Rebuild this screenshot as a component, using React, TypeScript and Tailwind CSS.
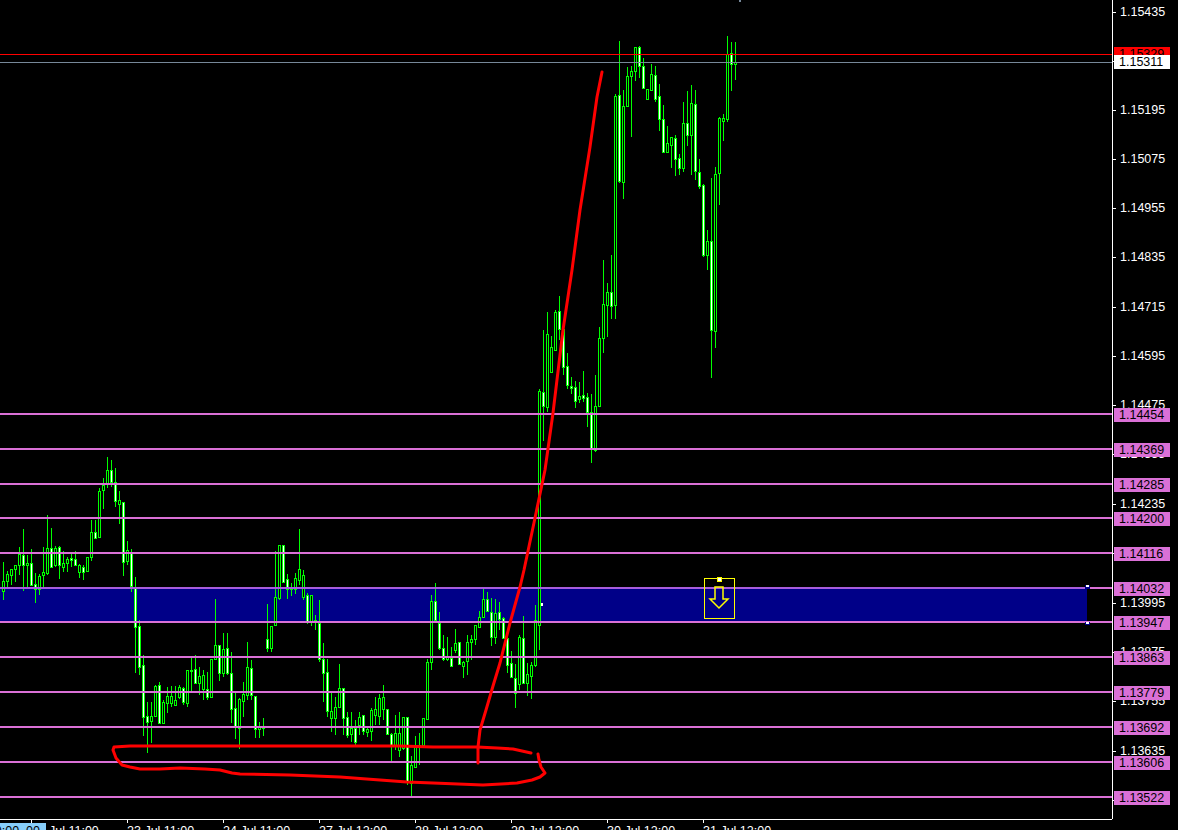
const GREEN = "#00ff00";

// [wick top, body top, body bottom, wick bottom, filled] - one candle every 4px from x=3
const candles: number[][] = [
  [562,581,591,600,0],[571,574,581,587,0],[569,569,575,585,0],[565,565,569,582,0],[547,554,565,575,0],[529,555,565,591,1],
  [555,563,565,587,0],[549,563,585,585,1],[573,584,589,603,1],[574,576,589,595,0],[547,572,575,587,0],[515,548,573,575,0],
  [528,548,567,567,1],[546,548,565,567,0],[546,547,565,579,1],[551,563,567,572,0],[557,559,563,572,0],[554,558,560,567,1],
  [551,559,565,565,1],[564,565,572,578,0],[565,567,572,580,1],[557,557,571,571,0],[520,532,557,561,0],[520,532,538,539,1],
  [488,491,537,538,0],[478,485,490,509,0],[457,470,483,488,0],[460,470,482,487,1],[468,482,501,507,1],[491,500,504,524,0],
  [502,502,562,576,1],[541,550,561,565,0],[549,552,586,592,1],[577,587,627,673,1],[620,626,667,675,1],[655,665,717,736,1],
  [702,716,722,753,1],[702,716,721,743,0],[685,686,716,717,0],[682,685,723,723,1],[700,702,723,723,0],[687,696,703,713,0],
  [686,696,703,707,0],[686,700,705,706,0],[685,687,697,699,0],[687,688,702,705,1],[670,670,703,707,0],[658,670,671,692,0],
  [655,669,683,683,1],[667,676,683,695,0],[670,675,689,700,0],[672,689,697,700,1],[659,659,697,698,0],[599,645,659,660,0],
  [645,645,673,681,1],[633,649,673,677,0],[633,648,673,675,1],[652,673,709,723,1],[693,708,727,739,1],[698,699,728,749,0],
  [682,694,701,717,0],[642,667,695,700,0],[660,668,695,700,1],[696,696,729,738,1],[722,727,729,738,0],[718,726,728,736,0],
  [604,639,648,652,1],[626,626,648,652,0],[551,597,625,626,0],[545,545,598,600,0],[545,545,582,582,1],[574,579,589,599,1],
  [583,588,589,596,0],[573,578,589,594,0],[529,569,580,585,0],[570,575,597,600,0],[593,595,622,624,1],[595,595,622,626,0],
  [615,620,622,630,0],[600,623,659,662,1],[643,659,673,702,1],[659,672,711,717,1],[693,711,718,732,0],[697,707,718,735,0],
  [664,688,707,708,0],[688,688,718,735,1],[712,717,735,738,1],[712,728,734,742,0],[720,728,742,745,1],[712,717,725,735,0],
  [715,715,731,735,1],[727,729,732,737,0],[708,710,731,741,0],[697,709,715,725,0],[694,698,716,725,0],[685,697,709,720,0],
  [709,709,734,735,1],[733,734,745,761,1],[715,733,745,750,0],[712,733,750,757,0],[717,717,748,750,0],[717,717,782,785,1],
  [756,765,783,796,0],[736,745,767,767,0],[733,745,747,765,0],[718,718,745,745,0],[659,662,719,720,0],[595,601,662,670,0],
  [583,601,620,620,1],[612,623,648,650,1],[635,648,659,661,1],[637,657,659,661,0],[647,658,666,667,1],[629,643,650,653,0],
  [642,642,664,665,1],[661,662,666,678,0],[635,642,661,675,0],[635,639,642,660,0],[625,625,639,645,0],[611,617,627,627,0],
  [589,599,617,617,0],[592,599,611,612,1],[598,612,637,646,1],[599,613,637,644,0],[602,612,619,630,1],[617,618,638,638,1],
  [637,638,665,673,1],[651,663,677,677,1],[664,678,693,708,1],[635,637,684,690,0],[616,638,683,684,1],[663,674,683,696,0],
  [662,665,676,699,0],[605,620,665,667,0],[389,391,625,650,0],[330,392,406,441,1],[312,334,407,412,0],[336,347,372,372,0],
  [310,312,350,350,0],[296,311,329,340,1],[329,329,367,375,1],[353,366,385,389,1],[377,386,388,394,1],[381,387,401,408,1],
  [382,396,399,403,0],[371,395,398,402,1],[393,397,412,427,1],[394,412,448,463,1],[375,406,450,452,0],[327,338,406,407,0],
  [260,304,338,353,0],[283,292,305,337,0],[255,292,306,319,1],[94,96,305,319,0],[41,95,181,183,1],[90,106,182,199,0],
  [67,76,106,107,0],[66,71,76,137,0],[47,47,71,81,0],[46,47,66,78,1],[58,66,88,89,1],[89,89,99,100,0],
  [64,74,90,90,0],[66,75,99,102,1],[84,96,119,131,1],[105,119,152,153,1],[126,143,152,152,0],[137,137,145,168,0],
  [135,138,159,176,1],[154,158,168,175,1],[102,123,168,172,0],[91,123,135,146,1],[85,103,135,175,0],[90,104,171,180,1],
  [159,172,186,189,1],[184,185,255,257,1],[230,241,255,270,0],[178,241,330,378,1],[167,174,331,348,0],[117,118,173,205,0],
  [114,118,121,141,0],[36,54,119,122,0],[42,53,64,91,1],[42,62,64,80,0],
];

const levelLines = [413, 448, 483, 517, 552, 621, 656, 691, 726, 761, 796];

const axisLabels = [
  ["1.15435", 12], ["1.15315", 61], ["1.15195", 110], ["1.15075", 159], ["1.14955", 208], ["1.14835", 257],
  ["1.14715", 307], ["1.14595", 356], ["1.14475", 405], ["1.14355", 454], ["1.14235", 504], ["1.14115", 553],
  ["1.13995", 603], ["1.13875", 652], ["1.13755", 701], ["1.13635", 751], ["1.13515", 800],
] as const;

const levelBoxes = [
  ["1.14454", 408], ["1.14369", 443], ["1.14285", 478], ["1.14200", 512], ["1.14116", 547], ["1.14032", 582],
  ["1.13947", 616], ["1.13863", 651], ["1.13779", 686], ["1.13692", 721], ["1.13606", 756], ["1.13522", 791],
] as const;

const timeLabels = ["23 Jul 11:00", "24 Jul 11:00", "27 Jul 12:00", "28 Jul 12:00", "29 Jul 12:00", "30 Jul 12:00", "31 Jul 12:00"];

const rally =
  "478,763 478,747 480,730 486,710 493,686 500,663 510,623 520,587 524,570 535,518 545,470 553,413 563,330 572,270 580,210 590,147 597,97 599,87 602,72";

const loop =
  "531,753 513,749 497,748 477,747 433,747 400,746 300,746 200,746 130,746 114,747 113,750 116,758 122,765 130,767 140,769 160,769 180,768 205,769 220,770 232,773 240,774 290,775 340,777 380,780 407,782 433,783 483,785 517,783 532,780 540,777 545,773 541,767 539,760 538,754";

function Chart() {
  return (
    <svg width="1112" height="819" className="block">
      <rect x="0" y="588" width="1087" height="34" fill="#000088" />
      <g shapeRendering="crispEdges">
        {candles.map(([hi, top, bottom, lo, filled], i) => {
          const x = 3 + i * 4;
          return (
            <g key={i}>
              <rect x={x} y={hi} width="1" height={lo - hi} fill={GREEN} />
              <rect x={x - 1} y={top} width="3" height={bottom - top + 1} fill={GREEN} />
              {bottom - top > 1 && (
                <rect x={x} y={top + 1} width="1" height={bottom - top - 1} fill={filled ? "#ffffff" : "#000000"} />
              )}
            </g>
          );
        })}
        {levelLines.map((y) => (
          <rect key={y} x="0" y={y} width="1112" height="2" fill="#da70d6" />
        ))}
        <rect x="0" y="587" width="1087" height="2" fill="#a85cdc" />
        <rect x="1087" y="587" width="25" height="2" fill="#da70d6" />
        <rect x="0" y="54" width="1112" height="1" fill="#ff0000" />
        <rect x="0" y="62" width="1112" height="1" fill="#778899" />
        {/* range handles */}
        <rect x="1085" y="585" width="5" height="4" fill="#000088" />
        <rect x="1086" y="585" width="3" height="2" fill="#ffffff" />
        <rect x="1085" y="622" width="5" height="3" fill="#000088" />
        <rect x="1086" y="622" width="3" height="2" fill="#ffffff" />
        <rect x="541" y="603" width="2" height="3" fill="#ffffff" />
        {/* arrow object */}
        <rect x="704.5" y="578.5" width="30" height="40" fill="none" stroke="#ffff00" />
        <rect x="717" y="577" width="5" height="5" fill="#ffff00" />
        <rect x="718" y="578" width="3" height="3" fill="#ffffff" />
        <rect x="739" y="0" width="2" height="2" fill="#778899" />
      </g>
      <path d="M715 587H723V599H728L719 608L710 599H715Z" fill="none" stroke="#ffff00" strokeWidth="1.5" />
      <polyline points={rally} fill="none" stroke="#ff0000" strokeWidth="3" strokeLinecap="round" strokeLinejoin="round" />
      <polyline points={loop} fill="none" stroke="#ff0000" strokeWidth="3" strokeLinecap="round" strokeLinejoin="round" />
    </svg>
  );
}

function PriceAxis() {
  return (
    <div className="relative h-[819px] w-[66px] border-l border-white text-[12.5px] leading-[14px]">
      {axisLabels.map(([label, y]) => (
        <div key={label} className="absolute left-0 flex items-center text-white" style={{ top: y - 7 }}>
          <span className="h-px w-[3px] bg-white" />
          <span className="ml-1">{label}</span>
        </div>
      ))}
      <div className="absolute left-px top-[47px] h-[14px] w-[56px] bg-[#ff0000] pl-[5px] text-black">1.15329</div>
      <div className="absolute left-px top-[55px] h-[14px] w-[56px] bg-white pl-[5px] text-black">1.15311</div>
      {levelBoxes.map(([label, y]) => (
        <div
          key={label}
          className="absolute left-px h-[14px] w-[56px] bg-[#da70d6] pl-[5px] text-black"
          style={{ top: y }}
        >
          {label}
        </div>
      ))}
    </div>
  );
}

function TimeAxis() {
  return (
    <div className="relative h-[11px] w-[1112px] overflow-hidden border-t border-white text-[12.5px] leading-[14px] text-white">
      <div className="absolute left-[31px] top-0 h-[3px] w-px bg-white" />
      <div className="flex pl-[127px]">
        {timeLabels.map((label) => (
          <div key={label} className="w-[96px] shrink-0">
            <div className="h-[3px] w-px bg-white" />
            <div className="mt-px">{label}</div>
          </div>
        ))}
      </div>
      <div className="absolute left-[49px] top-[4px]">Jul 11:00</div>
      <div className="absolute left-0 top-[3px] flex h-[7px] w-[46px] justify-end overflow-hidden whitespace-nowrap bg-[#87cefa] pr-[6px] pt-px text-black">
        <span className="shrink-0">00:00&nbsp;&nbsp;00</span>
      </div>
    </div>
  );
}

export default function App() {
  return (
    <div className="h-[830px] w-[1178px] overflow-hidden bg-black font-['Liberation_Sans',Arial,sans-serif]">
      <div className="flex">
        <Chart />
        <PriceAxis />
      </div>
      <TimeAxis />
    </div>
  );
}
